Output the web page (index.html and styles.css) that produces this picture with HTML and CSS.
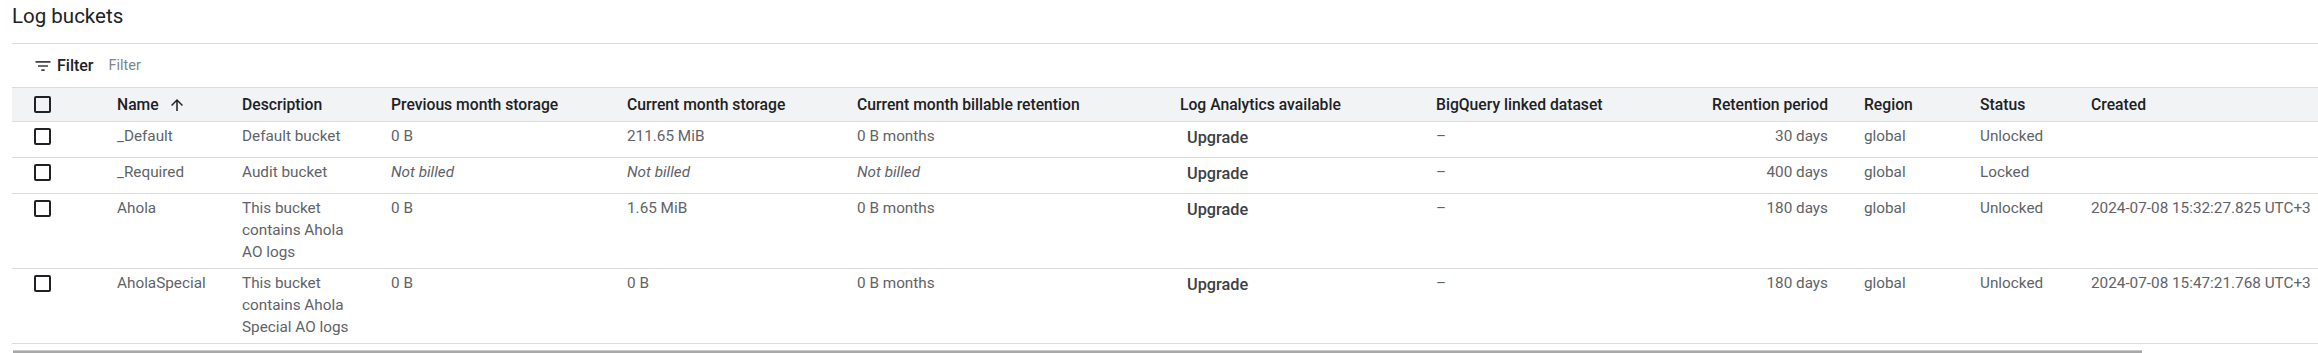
FILE: index.html
```html
<!DOCTYPE html>
<html lang="en">
<head>
<meta charset="utf-8">
<title>Log buckets</title>
<link rel="stylesheet" href="styles.css">
</head>
<body>
<div class="page">
  <div class="title-bar"><h1 class="title">Log buckets</h1></div>
  <div class="filter-bar">
    <svg class="filter-icon" viewBox="0 0 24 24" width="20" height="20"><path d="M10 18h4v-2h-4v2zM3 6v2h18V6H3zm3 7h12v-2H6v2z"/></svg>
    <span class="filter-label">Filter</span>
    <span class="filter-placeholder">Filter</span>
  </div>
  <div class="table-wrap">
    <div class="table">
      <div class="row head">
        <div class="cell check"><span class="box"></span></div>
        <div class="cell">Name<svg class="sort" viewBox="0 0 24 24" width="18" height="18"><path d="M4 12l1.41 1.41L11 7.83V20h2V7.83l5.58 5.59L20 12l-8-8-8 8z"/></svg></div>
        <div class="cell">Description</div>
        <div class="cell">Previous month storage</div>
        <div class="cell">Current month storage</div>
        <div class="cell">Current month billable retention</div>
        <div class="cell">Log Analytics available</div>
        <div class="cell">BigQuery linked dataset</div>
        <div class="cell num">Retention period</div>
        <div class="cell">Region</div>
        <div class="cell">Status</div>
        <div class="cell">Created</div>
      </div>
      <div class="row">
        <div class="cell check"><span class="box"></span></div>
        <div class="cell">_Default</div>
        <div class="cell desc">Default bucket</div>
        <div class="cell">0 B</div>
        <div class="cell">211.65 MiB</div>
        <div class="cell">0 B months</div>
        <div class="cell"><span class="upgrade">Upgrade</span></div>
        <div class="cell">–</div>
        <div class="cell num">30 days</div>
        <div class="cell">global</div>
        <div class="cell">Unlocked</div>
        <div class="cell"></div>
      </div>
      <div class="row">
        <div class="cell check"><span class="box"></span></div>
        <div class="cell">_Required</div>
        <div class="cell desc">Audit bucket</div>
        <div class="cell"><em>Not billed</em></div>
        <div class="cell"><em>Not billed</em></div>
        <div class="cell"><em>Not billed</em></div>
        <div class="cell"><span class="upgrade">Upgrade</span></div>
        <div class="cell">–</div>
        <div class="cell num">400 days</div>
        <div class="cell">global</div>
        <div class="cell">Locked</div>
        <div class="cell"></div>
      </div>
      <div class="row">
        <div class="cell check"><span class="box"></span></div>
        <div class="cell">Ahola</div>
        <div class="cell desc">This bucket contains Ahola AO logs</div>
        <div class="cell">0 B</div>
        <div class="cell">1.65 MiB</div>
        <div class="cell">0 B months</div>
        <div class="cell"><span class="upgrade">Upgrade</span></div>
        <div class="cell">–</div>
        <div class="cell num">180 days</div>
        <div class="cell">global</div>
        <div class="cell">Unlocked</div>
        <div class="cell">2024-07-08 15:32:27.825 UTC+3</div>
      </div>
      <div class="row">
        <div class="cell check"><span class="box"></span></div>
        <div class="cell">AholaSpecial</div>
        <div class="cell desc">This bucket contains Ahola Special AO logs</div>
        <div class="cell">0 B</div>
        <div class="cell">0 B</div>
        <div class="cell">0 B months</div>
        <div class="cell"><span class="upgrade">Upgrade</span></div>
        <div class="cell">–</div>
        <div class="cell num">180 days</div>
        <div class="cell">global</div>
        <div class="cell">Unlocked</div>
        <div class="cell">2024-07-08 15:47:21.768 UTC+3</div>
      </div>
    </div>
  </div>
  <div class="hscroll"><div class="hscroll-thumb"></div></div>
</div>
</body>
</html>
```
FILE: styles.css
```css
html, body {
  margin: 0;
  padding: 0;
  background: #ffffff;
}
body {
  font-family: Roboto, "Liberation Sans", Arial, sans-serif;
  font-size: 15.3px;
  color: #5f6368;
}
.page {
  padding-left: 12px;
}
.title-bar {
  height: 43px;
  border-bottom: 1px solid #dadce0;
}
.title {
  margin: 0;
  padding-top: 2px;
  font-size: 20.5px;
  line-height: 28px;
  font-weight: 400;
  color: #202124;
}
.filter-bar {
  height: 43px;
  display: flex;
  align-items: center;
  padding-left: 21px;
}
.filter-icon {
  fill: #3c4043;
  margin-right: 4px;
}
.filter-label {
  font-size: 16px;
  font-weight: 500;
  color: #202124;
  margin-right: 15px;
}
.filter-placeholder {
  font-size: 14.5px;
  color: #80868b;
}
.table-wrap {
  overflow: hidden;
}
.table {
  width: 2498px;
}
.row {
  display: grid;
  grid-template-columns: 93px 125px 149px 236px 230px 323px 256px 276px 152px 116px 111px 431px;
  min-height: 35px;
  border-bottom: 1px solid #dadce0;
}
.cell {
  padding: 3px 12px 5px;
  line-height: 22px;
  white-space: normal;
}
.row.head {
  min-height: 0;
  height: 33px;
  background: #f1f3f4;
  border-top: 1px solid #dadce0;
  align-items: center;
  color: #202124;
  font-size: 15.7px;
  font-weight: 500;
}
.row.head .cell {
  padding: 0 12px;
  display: flex;
  align-items: center;
  white-space: nowrap;
}
.row.head .cell.num {
  justify-content: flex-end;
  padding-right: 24px;
}
.cell.check {
  padding-left: 22px;
  display: flex;
  align-items: flex-start;
}
.row.head .cell.check {
  padding-left: 22px;
}
.box {
  display: block;
  width: 17px;
  height: 17px;
  box-sizing: border-box;
  border: 2px solid #202124;
  border-radius: 2px;
  margin-top: 3px;
}
.row.head .box {
  margin-top: 0;
}
.sort {
  fill: #202124;
  margin-left: 9px;
}
.desc {
  padding-right: 22px;
}
.num {
  text-align: right;
  padding-right: 24px;
}
em {
  font-style: italic;
}
.upgrade {
  display: inline-block;
  padding: 0 7px;
  margin-top: 2px;
  font-size: 16.3px;
  font-weight: 500;
  color: #3c4043;
}
.hscroll {
  height: 8px;
  margin-top: 6px;
  overflow: hidden;
}
.hscroll-thumb {
  width: 2129px;
  height: 100%;
  margin-left: 1px;
  box-sizing: border-box;
  border-top: 1px solid #c8c8c8;
  background: #a8a8a8;
}
```
